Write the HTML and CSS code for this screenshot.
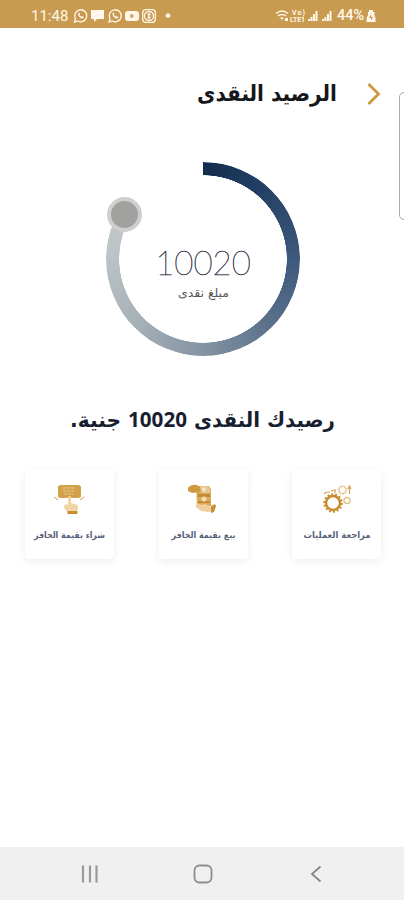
FILE: index.html
```html
<!DOCTYPE html>
<html lang="ar">
<head>
    <meta charset="UTF-8">
    <meta name="viewport" content="width=device-width, initial-scale=1.0">
    <title>الرصيد النقدى</title>
    <link rel="stylesheet" href="styles.css">
</head>
<body>
    <div class="status">
        <span class="time">11:48</span>
        <svg class="status-left" width="98" height="16" viewBox="0 0 98 16" fill="none" stroke="#fff8ea" stroke-width="1.3">
            <path d="M1.5 14l1-3.3a6 6 0 1 1 2.3 2.3z"/>
            <path d="M5 5.5c0 3 2.5 5 5 5l.8-1.5-1.8-1-1 .7-1.6-1.7.6-1-.8-1.6z" fill="#fff8ea" stroke="none"/>
            <path d="M18 2h13v9h-7l-3 3v-3h-3z" fill="#fff8ea" stroke="none"/>
            <path d="M36 14l1-3.3a6 6 0 1 1 2.3 2.3z"/>
            <path d="M39.5 5.5c0 3 2.5 5 5 5l.8-1.5-1.8-1-1 .7-1.6-1.7.6-1-.8-1.6z" fill="#fff8ea" stroke="none"/>
            <rect x="52" y="3" width="14" height="10" rx="3" fill="#fff8ea" stroke="none"/>
            <path d="M57.5 5.5v5l4-2.5z" fill="#c99b51" stroke="none"/>
            <rect x="69.7" y="1.7" width="12.6" height="12.6" rx="3"/>
            <circle cx="76" cy="8" r="4.5"/>
            <path d="M76 5v6M74.5 6.5h3M74.5 9.5h3"/>
            <circle cx="95" cy="7.5" r="2.3" fill="#fff8ea" stroke="none"/>
        </svg>
        <svg class="status-right" width="60" height="16" viewBox="0 0 60 16" fill="#fff8ea">
            <path d="M1 5.5q6-5 12 0M3 8q4-3 8 0" fill="none" stroke="#fff8ea" stroke-width="1.5"/>
            <path d="M5 9.5h4l-2 2.5zM10 13v-3h3v3z"/>
            <text x="17" y="7" textLength="13">Vo)</text>
            <text x="15" y="13.5" textLength="15">LTE1</text>
            <path d="M33 13v-2h2v2zM35.5 13V9h2v4zM38 13V6h2v7zM40.5 13V3h2v10zM47 13v-2h2v2zM49.5 13V9h2v4zM52 13V6h2v7zM54.5 13V3h2v10z"/>
        </svg>
        <span class="percent">44%</span>
        <svg width="10" height="14" viewBox="0 0 10 14">
            <path d="M3 1h4v2h1.5v3L9.5 9v4h-9V9L2 6V3h1z" fill="#fff8ea"/>
            <path d="M5 5L3 9h2v3l2-4H5z" fill="#c99b51"/>
        </svg>
    </div>

    <header>
        <svg width="16" height="24" viewBox="0 0 16 24" fill="none" stroke="#cd973c" stroke-width="2.8">
            <path d="M2.5 2L12.5 12L2.5 22"/>
        </svg>
        <h1><svg width="142" height="42"><text x="141" y="22" textLength="140" lengthAdjust="spacingAndGlyphs">الرصيد النقدى</text></svg></h1>
    </header>
    <div class="side-handle"></div>

    <main>
        <div class="gauge">
            <div class="ring"></div>
            <div class="knob"></div>
            <div class="amount">10020</div>
            <svg class="caption" width="56" height="24"><text x="54" y="14" textLength="51" lengthAdjust="spacingAndGlyphs">مبلغ نقدى</text></svg>
        </div>

        <svg class="summary" width="272" height="40">
            <text x="269" y="25" textLength="141" lengthAdjust="spacingAndGlyphs">رصيدك النقدى</text>
            <text class="number" x="62" y="25" textLength="59" lengthAdjust="spacingAndGlyphs">10020</text>
            <text x="55" y="25" textLength="51" lengthAdjust="spacingAndGlyphs">جنية.</text>
        </svg>

        <div class="cards">
            <div class="card">
                <svg width="34" height="34" viewBox="0 0 34 34" fill="none" stroke="#d5a452">
                    <circle cx="13" cy="21" r="7" stroke="#c98d2e" stroke-width="2.5"/>
                    <circle cx="13" cy="21" r="8.7" stroke="#c98d2e" stroke-width="2" stroke-dasharray="2 1.9"/>
                    <circle cx="22.5" cy="8" r="3.5" stroke="#e0bd82"/>
                    <circle cx="22.5" cy="8" r="4.5" stroke="#e0bd82" stroke-dasharray="1.3 1.5"/>
                    <circle cx="27" cy="18.5" r="3" stroke="#e3c48f" stroke-width="1.5"/>
                    <path d="M4 12l2-1.5 4-.5M11 9l4-1v3M29.5 12V5M28 7l1.5-3L31 7" stroke-width="1.2"/>
                </svg>
                <svg width="72" height="18"><text x="69.5" y="11" textLength="67" lengthAdjust="spacingAndGlyphs">مراجعة العمليات</text></svg>
            </div>
            <div class="card">
                <svg width="34" height="34" viewBox="0 0 34 34">
                    <path d="M10 4h13l2 3v17H11z" fill="#d9ab5b"/>
                    <path d="M2 6q3-4 9-3l4 3q2 3-1 4l-8 1-4-2z" fill="#cf9a40"/>
                    <path d="M14 4h8l2 3v4h-9z" fill="#e8c78e"/>
                    <circle cx="18" cy="7.5" r="2" fill="#f7e5c6"/>
                    <path d="M12 12h12v3H12zM12 19h12v2H12z" fill="#c38c31"/>
                    <circle cx="18" cy="17" r="2.5" fill="#f4ddb6"/>
                    <path d="M10 21l6 2 3-1 6 3 2 4-4 1-8-1-5-4z" fill="#efcf9f"/>
                    <path d="M25 24l4-2 1 2-2 6-3 1z" fill="#c99033"/>
                </svg>
                <svg width="72" height="18"><text x="68.5" y="11" textLength="64" lengthAdjust="spacingAndGlyphs">بيع بقيمة الحافز</text></svg>
            </div>
            <div class="card">
                <svg class="buy-icon" width="34" height="34" viewBox="0 0 34 34">
                    <rect x="3" y="3" width="23" height="13" rx="2.5" fill="#d3a14b"/>
                    <path d="M8 6h12M8 9h12M9 12h9" stroke="#e5bf80" stroke-width="1.3" stroke-dasharray="3 1"/>
                    <path d="M13 15q1.500-2 3 0v6l7 2v4l-3 4h-7l-4-5 1-4 3 1z" fill="#f2d4a7"/>
                    <path d="M12.5 29h10v3h-10z" fill="#c88e33"/>
                    <path d="M-1 15l4 3M29 15l-4 3" stroke="#dfba7c" stroke-width="1.2"/>
                </svg>
                <svg width="76" height="18"><text x="73" y="11" textLength="71" lengthAdjust="spacingAndGlyphs">شراء بقيمة الحافز</text></svg>
            </div>
        </div>
    </main>

    <footer>
        <svg width="18" height="18" viewBox="0 0 18 18" fill="none" stroke="#9a9a9a" stroke-width="2.2">
            <path d="M2 .5v17M9 .5v17M15.5 .5v17"/>
        </svg>
        <svg class="home" width="20" height="20" viewBox="0 0 20 20" fill="none" stroke="#8d8d8d" stroke-width="1.8">
            <rect x="1.5" y="1.5" width="17" height="17" rx="5"/>
        </svg>
        <svg width="12" height="18" viewBox="0 0 12 18" fill="none" stroke="#858585" stroke-width="1.8">
            <path d="M10.5 1.5L2 9l8.5 7.5"/>
        </svg>
    </footer>
</body>
</html>
```

FILE: styles.css
```css
* {
    box-sizing: border-box;
}
body {
    margin: 0;
    width: 404px;
    height: 900px;
    display: flex;
    flex-direction: column;
    position: relative;
    overflow: hidden;
    background-color: #fff;
    font-family: 'DejaVu Sans', sans-serif;
}
svg {
    display: block;
    flex: none;
    overflow: visible;
}
svg text {
    direction: rtl;
    stroke: none;
}
.status {
    height: 28px;
    flex: none;
    display: flex;
    align-items: center;
    padding: 3px 28px 0 31px;
    background-color: #c99b51;
    color: #fff8ea;
    font-family: Roboto, sans-serif;
    font-size: 15px;
}
.time {
    width: 42px;
}
.status-right {
    margin-left: auto;
}
.status-right text {
    direction: ltr;
    font-size: 7px;
    font-weight: bold;
}
.percent {
    width: 29px;
    margin-left: 2px;
    font-size: 14.5px;
    font-weight: 500;
}
header {
    direction: rtl;
    height: 72px;
    flex: none;
    display: flex;
    align-items: flex-start;
    gap: 28px;
    padding: 54px 22px 0 0;
}
h1 {
    margin: -3px 0 0;
    font-size: 22px;
}
h1 text {
    font-weight: bold;
    fill: #15171b;
}
.side-handle {
    position: absolute;
    top: 92px;
    right: -8px;
    width: 13px;
    height: 128px;
    border: 1px solid #aaa;
    border-radius: 5px;
}
main {
    flex: 1;
    display: flex;
    flex-direction: column;
    align-items: center;
}
.gauge {
    position: relative;
    width: 194px;
    height: 194px;
    margin: 62px 0 0 2px;
    display: flex;
    flex-direction: column;
    align-items: center;
}
.ring {
    position: absolute;
    inset: 0;
    border-radius: 50%;
    background: conic-gradient(#122c4d 0deg, #213e62 35deg, #3d597c 90deg, #5b718b 135deg, #8493a3 180deg, #a6b0b8 225deg, #bbc4c6 275deg, #c5c9c8 300deg, transparent 300deg);
    -webkit-mask: radial-gradient(circle, transparent 83.5px, #000 84px);
    mask: radial-gradient(circle, transparent 83.5px, #000 84px);
}
.knob {
    position: absolute;
    left: 1px;
    top: 35px;
    width: 35px;
    height: 35px;
    border: 4px solid #cfcfcd;
    border-radius: 50%;
    background-color: #a1a19f;
}
.amount {
    margin-top: 79px;
    font-family: Lato, sans-serif;
    font-weight: 200;
    font-size: 33px;
    line-height: 42px;
    color: #262c3d;
    -webkit-text-stroke: 0.4px #262c3d;
}
.caption {
    font-size: 12px;
    fill: #555;
}
.summary {
    margin-top: 46px;
    font-size: 20.5px;
    font-weight: bold;
    fill: #181e30;
}
.summary .number {
    direction: ltr;
    font-family: 'Open Sans', sans-serif;
}
.cards {
    direction: rtl;
    width: 100%;
    margin-top: 28px;
    padding: 0 23px 0 25px;
    display: flex;
    justify-content: space-between;
}
.card {
    width: 89px;
    height: 89px;
    padding-top: 12px;
    display: flex;
    flex-direction: column;
    align-items: center;
    gap: 11px;
    border-radius: 4px;
    background-color: #fff;
    box-shadow: 0 2px 9px rgba(0, 0, 0, 0.08);
}
.card text {
    font-size: 9px;
    font-weight: bold;
    fill: #58627b;
}
.buy-icon {
    margin-left: 5px;
}
footer {
    height: 53px;
    flex: none;
    display: flex;
    align-items: center;
    justify-content: space-between;
    padding: 0 82px 0 81px;
    background-color: #f0f0f0;
}
.home {
    margin-left: -4px;
}
```
